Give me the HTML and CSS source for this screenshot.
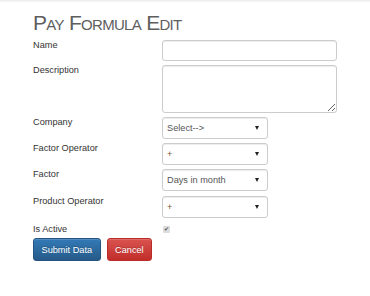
FILE: index.html
```html
<!DOCTYPE html>
<html lang="en">
<head>
  <meta charset="UTF-8" />
  <meta name="viewport" content="width=device-width, initial-scale=1.0"/>
  <title>Pay Formula Edit</title>
  <link rel="stylesheet" href="styles.css">
</head>
<body>
  <div class="topbar"></div>
  <div class="page">
    <h2 class="title">Pay Formula Edit</h2>

    <form id="payFormulaForm" class="form-grid">
      <label for="name">Name</label>
      <div><input id="name" type="text" class="field wide"/></div>

      <label for="description">Description</label>
      <div><textarea id="description" class="field wide area"></textarea></div>

      <label for="company">Company</label>
      <div class="select-wrap">
        <select id="company" class="field sel">
          <option>Select--&gt;</option>
        </select>
      </div>

      <label for="factoroperator">Factor Operator</label>
      <div class="select-wrap">
        <select id="factoroperator" class="field sel op">
          <option>+</option>
        </select>
      </div>

      <label for="factor">Factor</label>
      <div class="select-wrap">
        <select id="factor" class="field sel">
          <option>Days in month</option>
        </select>
      </div>

      <label for="productoperator" class="prod-label">Product Operator</label>
      <div class="select-wrap prod">
        <select id="productoperator" class="field sel op">
          <option>+</option>
        </select>
      </div>

      <label for="isactive" class="active-label">Is Active</label>
      <div><span id="isactive" class="check">&#10004;</span></div>

      <div class="buttons">
        <button type="button" class="btn btn-primary">Submit Data</button>
        <button type="button" class="btn btn-danger">Cancel</button>
      </div>
    </form>
  </div>
</body>
</html>
```

FILE: styles.css
```css
body {
  margin: 0;
  font-family: "Liberation Sans", Arial, sans-serif;
  font-size: 9.2px;
  color: #333;
  background-color: #fff;
}

.topbar {
  height: 2px;
  background: linear-gradient(#ececec, #f8f8f8);
}

.page {
  padding: 0 0 0 33px;
}

.title {
  margin: 9px 0 6px 0;
  font-size: 21px;
  font-weight: normal;
  font-variant: small-caps;
  color: #5e5e5e;
  line-height: 23px;
  letter-spacing: -0.7px;
}

.form-grid {
  display: grid;
  grid-template-columns: 129px auto;
  row-gap: 4px;
  align-items: start;
}

label {
  line-height: 11px;
}

.field {
  box-sizing: border-box;
  display: block;
  font-family: "Liberation Sans", Arial, sans-serif;
  font-size: 9.2px;
  color: #555;
  border: 1px solid #ccc;
  border-radius: 3px;
  background: #fff;
  box-shadow: inset 0 1px 1px rgba(0, 0, 0, 0.075);
  padding: 0 5px;
  margin: 0;
}

.wide {
  width: 175px;
  height: 21px;
}

.area {
  height: 48px;
  resize: vertical;
}

.select-wrap {
  position: relative;
  width: 106px;
}

.sel {
  width: 106px;
  height: 22px;
  -webkit-appearance: none;
  appearance: none;
  padding-left: 4px;
}

.op {
  color: #7a5632;
}

.select-wrap::after {
  content: "";
  position: absolute;
  right: 9px;
  top: 9px;
  border-left: 2.5px solid transparent;
  border-right: 2.5px solid transparent;
  border-top: 4px solid #222;
}

.prod-label,
.prod {
  margin-top: 1px;
}

.active-label {
  margin-top: 2px;
}

.check {
  display: inline-block;
  width: 7px;
  height: 7px;
  margin: 4px 0 0 1px;
  background: #ddd;
  border-radius: 1px;
  color: #555;
  font-size: 6px;
  line-height: 7px;
  text-align: center;
}

.buttons {
  grid-column: 1 / 3;
  display: flex;
  gap: 6px;
  margin-top: -1px;
}

.btn {
  height: 23px;
  padding: 0 7.5px;
  font-family: "Liberation Sans", Arial, sans-serif;
  font-size: 9.2px;
  color: #fff;
  border-radius: 3px;
  cursor: pointer;
  text-shadow: 0 -1px 0 rgba(0, 0, 0, 0.2);
  box-shadow: inset 0 1px 0 rgba(255, 255, 255, 0.15), 0 1px 1px rgba(0, 0, 0, 0.075);
}

.btn-primary {
  background: linear-gradient(#337ab7, #265a88);
  border: 1px solid #245580;
}

.btn-danger {
  background: linear-gradient(#d9534f, #c12e2a);
  border: 1px solid #b92c28;
}
```
